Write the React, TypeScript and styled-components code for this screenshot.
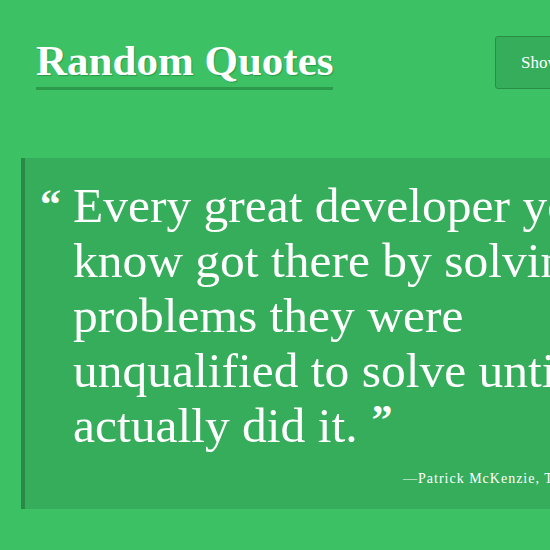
import styled, { createGlobalStyle } from 'styled-components';

const GlobalStyle = createGlobalStyle`
  html, body {
    margin: 0;
    padding: 0;
    background: #3cc264;
    overflow: hidden;
  }
  body {
    font-family: 'Liberation Serif', 'DejaVu Serif', serif;
    color: #ffffff;
  }
`;

const quoteLines = [
  'Every great developer you',
  'know got there by solving',
  'problems they were',
  'unqualified to solve until they',
  'actually did it.'
];

const App = () => {
  return (
    <Page>
      <GlobalStyle />
      <Header>
        <Title>Random Quotes</Title>
        <TweetButton>Show Tweet</TweetButton>
      </Header>
      <QuoteBox>
        <QuoteBody>
          <OpenMark>“</OpenMark>
          <QuoteText>
            {quoteLines.map((line, index) => (
              <Line key={index}>
                {line}
                {index === quoteLines.length - 1 && <CloseMark>”</CloseMark>}
              </Line>
            ))}
          </QuoteText>
        </QuoteBody>
        <Author>—Patrick McKenzie, Twitter</Author>
      </QuoteBox>
    </Page>
  );
};

export default App;

const Page = styled.div`
  width: 667px;
  min-height: 550px;
  box-sizing: border-box;
  padding: 0 21px;
`;

const Header = styled.header`
  display: flex;
  align-items: flex-start;
  justify-content: space-between;
  padding: 36px 15px 0;
  height: 158px;
  box-sizing: border-box;
`;

const Title = styled.h1`
  margin: 0;
  font-size: 43px;
  font-weight: 700;
  line-height: 50px;
  padding-bottom: 1px;
  border-bottom: 3px solid #2b9a4b;
  text-shadow: 1px 1px 1px rgba(0, 80, 30, 0.35);
  white-space: nowrap;
`;

const TweetButton = styled.button`
  flex-shrink: 0;
  height: 53px;
  padding: 0 25px;
  background: #35ad5a;
  border: 1px solid #2a8c45;
  border-radius: 3px;
  color: #ffffff;
  font-family: 'Liberation Serif', serif;
  font-size: 17px;
`;

const QuoteBox = styled.section`
  background: #35ad5a;
  border-left: 4px solid #2a8a45;
  padding: 20px 0 0;
  height: 351px;
  box-sizing: border-box;
`;

const QuoteBody = styled.div`
  display: flex;
  align-items: flex-start;
  padding-left: 15px;
`;

const OpenMark = styled.span`
  flex: 0 0 33px;
  font-size: 42px;
  font-weight: 700;
  line-height: 42px;
  margin-top: 5px;
`;

const QuoteText = styled.div`
  flex-shrink: 0;
  font-size: 49.5px;
  line-height: 55px;
  white-space: nowrap;
`;

const Line = styled.div``;

const CloseMark = styled.span`
  font-size: 42px;
  font-weight: 700;
  line-height: 0;
  margin-left: 14px;
  vertical-align: 8px;
`;

const Author = styled.p`
  margin: 18px 0 0;
  padding-left: 378px;
  font-size: 14px;
  line-height: 16px;
  letter-spacing: 1px;
  white-space: nowrap;
`;
